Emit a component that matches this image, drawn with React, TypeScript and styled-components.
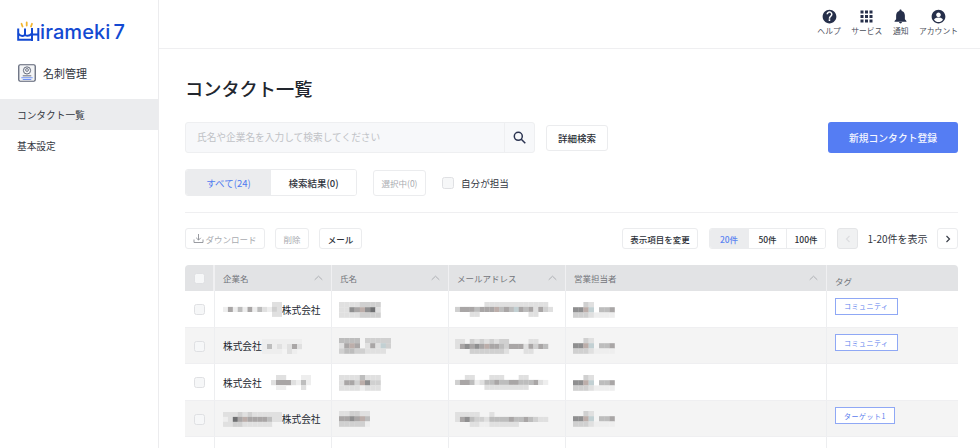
import React from "react";
import styled, { createGlobalStyle } from "styled-components";

const Global = createGlobalStyle`
  html, body { margin: 0; padding: 0; background: #fff; }
  body { font-family: "Noto Sans CJK JP", "Noto Sans", sans-serif; color: #22262e; overflow: hidden; }
  * { box-sizing: border-box; }
`;

const Page = styled.div`
  display: flex;
  width: 980px;
  height: 448px;
  overflow: hidden;
`;

const Sidebar = styled.aside`
  width: 159px;
  flex: none;
  border-right: 1px solid #ececee;
  display: flex;
  flex-direction: column;
`;

const LogoRow = styled.div`
  display: flex;
  align-items: center;
  height: 34px;
  margin-top: 15px;
  padding-left: 17px;
`;

const LogoText = styled.span`
  font-family: Inter, "Liberation Sans", sans-serif;
  font-size: 20px;
  font-weight: 500;
  line-height: 24px;
  color: #1349d2;
  letter-spacing: 0.1px;
`;

const LogoSeven = styled.span`
  font-family: Inter, "Liberation Sans", sans-serif;
  font-size: 20px;
  font-weight: 500;
  line-height: 24px;
  color: #1349d2;
  margin-left: 3px;
`;

const ProductRow = styled.div`
  display: flex;
  align-items: center;
  gap: 7px;
  height: 24px;
  margin-top: 12px;
  padding-left: 18px;
  font-size: 11px;
  color: #30343c;
`;

const NavList = styled.nav`
  display: flex;
  flex-direction: column;
  margin-top: 14px;
`;

const NavItem = styled.div<{ $active?: boolean }>`
  height: 31px;
  display: flex;
  align-items: center;
  padding-left: 17px;
  font-size: 9.7px;
  color: #33373f;
  background: ${(p) => (p.$active ? "#ebecee" : "transparent")};
`;

const Main = styled.main`
  flex: 1;
  min-width: 0;
  display: flex;
  flex-direction: column;
`;

const TopBar = styled.header`
  height: 49px;
  flex: none;
  border-bottom: 1px solid #efeff1;
  display: flex;
  justify-content: flex-end;
  gap: 10.5px;
  padding: 9px 22px 0 0;
`;

const TopItem = styled.div`
  display: flex;
  flex-direction: column;
  align-items: center;
  gap: 1px;
  font-size: 7.8px;
  line-height: 11px;
  color: #4a4e5a;
  white-space: nowrap;
`;

const Content = styled.div`
  padding: 0 22px 0 26px;
  display: flex;
  flex-direction: column;
`;

const Title = styled.h1`
  margin: 25px 0 0;
  font-size: 18.2px;
  line-height: 28px;
  font-weight: 500;
  color: #22262e;
`;

const SearchRow = styled.div`
  display: flex;
  align-items: center;
  margin-top: 20px;
  height: 31px;
`;

const SearchBox = styled.div`
  width: 350px;
  height: 31px;
  display: flex;
  background: #f7f8fa;
  border: 1px solid #eeeff1;
  border-radius: 3px;
`;

const SearchPlaceholder = styled.div`
  flex: 1;
  padding-left: 11px;
  font-size: 9.7px;
  line-height: 29px;
  color: #c0c2c6;
  border-right: 1px solid #eeeff1;
`;

const SearchButton = styled.div`
  width: 29px;
  display: flex;
  align-items: center;
  justify-content: center;
`;

const Btn = styled.div<{ $muted?: boolean; $w: number; $h?: number }>`
  width: ${(p) => p.$w}px;
  height: ${(p) => p.$h ?? 21}px;
  flex: none;
  display: flex;
  align-items: center;
  justify-content: center;
  gap: 1px;
  background: #fff;
  border: 1px solid #ebecee;
  border-radius: 3px;
  font-size: 8.5px;
  font-weight: ${(p) => (p.$muted ? 400 : 500)};
  color: ${(p) => (p.$muted ? "#a9abb0" : "#2b2f37")};
  white-space: nowrap;
`;

const DetailBtn = styled(Btn)`
  margin-left: 11px;
  font-size: 9.5px;
`;

const PrimaryBtn = styled.div`
  margin-left: auto;
  width: 130px;
  height: 31px;
  background: #557df3;
  border-radius: 3px;
  color: #f4f6ff;
  font-size: 9.8px;
  font-weight: 500;
  display: flex;
  align-items: center;
  justify-content: center;
`;

const FilterRow = styled.div`
  display: flex;
  align-items: center;
  margin-top: 16px;
  height: 27px;
`;

const Tabs = styled.div`
  display: flex;
  width: 172px;
  height: 27px;
  border: 1px solid #ebecee;
  border-radius: 3px;
  overflow: hidden;
`;

const Tab = styled.div<{ $active?: boolean; $w: number }>`
  width: ${(p) => p.$w}px;
  display: flex;
  align-items: center;
  justify-content: center;
  font-size: 9.5px;
  font-weight: ${(p) => (p.$active ? 400 : 500)};
  background: ${(p) => (p.$active ? "#ebecee" : "#fff")};
  color: ${(p) => (p.$active ? "#4f7bf0" : "#30343c")};
`;

const Selected = styled(Btn)`
  margin-left: 16px;
  color: #a9abb0;
`;

const Check = styled.span`
  display: block;
  width: 12px;
  height: 12px;
  flex: none;
  background: #f6f7f8;
  border: 1px solid #dfe0e3;
  border-radius: 2.5px;
`;

const TableCheck = styled(Check)`
  width: 11px;
  height: 11px;
`;

const OwnFilter = styled.label`
  display: flex;
  align-items: center;
  gap: 7px;
  margin-left: 16px;
  font-size: 9.6px;
  color: #33373f;
`;

const Rule = styled.hr`
  margin: 16px 0 0;
  border: 0;
  border-top: 1px solid #efeff1;
  height: 0;
`;

const ToolRow = styled.div`
  display: flex;
  align-items: center;
  margin-top: 15px;
  height: 21px;
  gap: 10px;
`;

const Spacer = styled.div`
  flex: 1;
`;

const Seg = styled.div`
  display: flex;
  height: 21px;
  margin-left: 1px;
  border: 1px solid #ebecee;
  border-radius: 3px;
  overflow: hidden;
`;

const SegItem = styled.div<{ $active?: boolean; $w: number }>`
  width: ${(p) => p.$w}px;
  display: flex;
  align-items: center;
  justify-content: center;
  font-size: 8.5px;
  font-weight: 500;
  background: ${(p) => (p.$active ? "#ebecee" : "#fff")};
  color: ${(p) => (p.$active ? "#5b84f2" : "#2b2f37")};
  & + & { border-left: 1px solid #ebecee; }
`;

const Pager = styled.div`
  display: flex;
  align-items: center;
  margin-left: 1px;
`;

const PageBtn = styled.div<{ $disabled?: boolean }>`
  width: 21px;
  height: 21px;
  display: flex;
  align-items: center;
  justify-content: center;
  border: 1px solid ${(p) => (p.$disabled ? "#e4e5e7" : "#ebecee")};
  border-radius: 3px;
  background: ${(p) => (p.$disabled ? "#f0f1f2" : "#fff")};
`;

const PageLabel = styled.div`
  width: 79px;
  text-align: center;
  font-size: 10px;
  color: #33373f;
`;

const Table = styled.div`
  margin-top: 16px;
  width: 773px;
`;

const cols = "30px 117px 117px 117px 261px 131px";

const HeadRow = styled.div`
  display: grid;
  grid-template-columns: ${cols};
  height: 26px;
  background: #e2e3e5;
  border-radius: 4px 4px 0 0;
`;

const HeadCell = styled.div<{ $tag?: boolean }>`
  display: flex;
  align-items: ${(p) => (p.$tag ? "flex-end" : "center")};
  justify-content: space-between;
  padding: 0 8px 0 8px;
  font-size: 8.5px;
  line-height: 13px;
  padding-bottom: ${(p) => (p.$tag ? "3px" : "0")};
  color: #72757b;
  border-right: 1px solid #f0f0f2;
  &:last-child { border-right: 0; }
`;

const CheckCell = styled(HeadCell)`
  justify-content: center;
  padding: 0;
  border-right-width: 2px;
`;

const Row = styled.div<{ $alt?: boolean }>`
  display: grid;
  grid-template-columns: ${cols};
  height: 36.5px;
  background: ${(p) => (p.$alt ? "#f4f4f4" : "#fff")};
  border-bottom: 1px solid #efeff1;
`;

const Cell = styled.div`
  display: flex;
  align-items: center;
  padding: 2px 0 0 8px;
  font-size: 9.7px;
  color: #22262e;
  border-right: 1px solid #edeef0;
  white-space: nowrap;
  overflow: hidden;
  &:last-child { border-right: 0; }
`;

const MosaicCell = styled(Cell)`
  padding-left: 7px;
`;

const MailCell = styled(Cell)`
  padding-left: 6px;
`;

const BodyCheck = styled(Cell)`
  justify-content: center;
  padding-left: 0;
`;

const TagCell = styled(Cell)`
  align-items: flex-start;
  padding-top: 6.5px;
`;

const Tag = styled.span`
  display: inline-flex;
  align-items: center;
  justify-content: center;
  height: 17px;
  padding: 0 8px;
  border: 1px solid #8fa8f5;
  background: #fff;
  font-size: 7px;
  letter-spacing: 0.5px;
  color: #5c80ee;
`;

const MosaicSvg = styled.svg`
  display: block;
  flex: none;
  filter: blur(0.4px);
`;

/* one character per block: 0 = transparent, larger = darker, a/b = tinted */
const shades: Record<string, string> = {
  "1": "#eeeeee",
  "2": "#e0e0e0",
  "3": "#d0d0d0",
  "4": "#bdbdbd",
  "5": "#a9a6a6",
  "6": "#8f8f90",
  "7": "#6f7072",
  a: "#bcaeaa",
  b: "#c2d0d3",
};

const Mosaic = ({ rows, block = 5 }: { rows: string[]; block?: number }) => (
  <MosaicSvg
    width={rows[0].length * block}
    height={rows.length * block}
    viewBox={`0 0 ${rows[0].length * block} ${rows.length * block}`}
  >
    {rows.flatMap((r, y) =>
      r.split("").map((c, x) =>
        shades[c] ? <rect key={`${x}-${y}`} x={x * block} y={y * block} width={block + 0.2} height={block + 0.2} fill={shades[c]} /> : null
      )
    )}
  </MosaicSvg>
);

const Chevron = () => (
  <svg width="9" height="6" viewBox="0 0 9 6" fill="none">
    <path d="M.7 4.800l3.800-3.600 3.800 3.600" stroke="#aeb0b4" strokeWidth="1" />
  </svg>
);

const Pager2 = ({ dir, color }: { dir: "l" | "r"; color: string }) => (
  <svg width="6" height="8" viewBox="0 0 6 8" fill="none">
    <path d={dir === "r" ? "M1.500 1l3 3-3 3" : "M4.500 1l-3 3 3 3"} stroke={color} strokeWidth="1.200" />
  </svg>
);

const HelpIcon = () => (
  <svg width="15" height="15" viewBox="0 0 24 24">
    <path fill="#262f4a" d="M12 1C5.900 1 1 5.900 1 12s4.900 11 11 11 11-4.900 11-11S18.100 1 12 1zm1.200 18h-2.500v-2.500h2.500V19zm2.600-7.900l-1.100 1.100c-.9.900-1.500 1.600-1.500 3.300h-2.400v-.6c0-1.300.6-2.500 1.500-3.400l1.500-1.500c.4-.4.7-1 .7-1.700 0-1.300-1.100-2.400-2.400-2.400S9.600 7 9.600 8.300H7.200C7.200 5.700 9.400 3.500 12 3.500s4.800 2.200 4.800 4.800c0 1.100-.4 2-1 2.800z" />
  </svg>
);

const GridIcon = () => (
  <svg width="15" height="15" viewBox="0 0 15 15" fill="#262f4a">
    {[1.5, 6, 10.5].flatMap((y) => [1.5, 6, 10.5].map((x) => <rect key={`${x}${y}`} x={x} y={y} width="3" height="3" />))}
  </svg>
);

const BellIcon = () => (
  <svg width="15" height="15" viewBox="0 0 24 24">
    <path fill="#262f4a" d="M12 23c1.300 0 2.300-1 2.300-2.300H9.700C9.700 22 10.700 23 12 23zm7-6.500v-6c0-3.500-1.900-6.400-5.200-7.200v-.8C13.800 1.500 13 .7 12 .7s-1.800.8-1.800 1.800v.8C6.900 4.100 5 7 5 10.500v6L2.500 19v1.300h19V19L19 16.500z" />
  </svg>
);

const AccountIcon = () => (
  <svg width="15" height="15" viewBox="0 0 24 24">
    <path fill="#262f4a" d="M12 1C5.900 1 1 5.900 1 12s4.900 11 11 11 11-4.900 11-11S18.100 1 12 1zm0 4.500c2 0 3.700 1.700 3.700 3.700S14 12.900 12 12.900 8.300 11.200 8.300 9.200 10 5.500 12 5.500zm0 15.200c-2.900 0-5.500-1.500-7-3.700 0-2.300 4.700-3.600 7-3.600s7 1.300 7 3.600c-1.500 2.200-4.100 3.700-7 3.700z" />
  </svg>
);

const SearchIcon = () => (
  <svg width="13" height="13" viewBox="0 0 13 13" fill="none" stroke="#2a3350" strokeWidth="1.500">
    <circle cx="5.300" cy="5.300" r="4" />
    <path d="M8.300 8.300l4 4" />
  </svg>
);

const DownloadIcon = () => (
  <svg width="11" height="11" viewBox="0 0 11 11" fill="none" stroke="#8d9096" strokeWidth="0.900">
    <path d="M5.500 1v6M3.200 4.800l2.300 2.300 2.300-2.300M1 6.500v3h9v-3" />
  </svg>
);

const LogoMark = () => (
  <svg width="23" height="26" viewBox="0 0 23 26" fill="none">
    <g stroke="#f2b632" strokeWidth="1.800" strokeLinecap="round">
      <path d="M5.500 7.500L4.500 4.800M9.700 6.500V3.500M14 7.500l1-2.700" />
    </g>
    <g stroke="#1349d2" strokeWidth="2">
      <path d="M1.200 9.500v11.300h14M15 9v13M21.300 9v13M15 15.500h6.300" />
      <path d="M1.200 14.500q3 4 6.800 1.500q3.500 2 7-1.500" />
      <path d="M8 9.500v6.500" />
    </g>
  </svg>
);

const CardIcon = () => (
  <svg width="18" height="18" viewBox="0 0 19 19" fill="none">
    <rect x="0.800" y="0.800" width="17.400" height="17.400" rx="1.500" fill="#f3f4f6" stroke="#5b6274" strokeWidth="1.300" />
    <circle cx="9.500" cy="6.800" r="3.800" stroke="#5b6274" strokeWidth="1" />
    <circle cx="9.500" cy="6.300" r="1.500" stroke="#5b6274" strokeWidth="0.900" />
    <path d="M5 12.500h9" stroke="#5b6274" strokeWidth="1" />
    <path d="M3.500 14.500h12M5 16.300h9" stroke="#6f92f2" strokeWidth="1.100" />
  </svg>
);

const companyMasks = [
  ["000000000022", "151415142132", "000000000022"],
  ["11111111", "14121252", "11110210"],
  ["02200011", "25552141", "01100020"],
  ["222323222222", "1275a5555422", "223322222200"],
];

const nameMasks = [
  ["22223333", "2265a672", "22223333"],
  ["4444033333", "25a50252b3", "3443322220"],
  ["22224222", "2553a633", "22221222"],
  ["223322", "5565a4", "333331"],
];

const mailMasks = [
  ["00000022222222222220", "35554555a454b5452532", "00022000000000022000"],
  ["22032323233000022000", "256565a5543555253540", "00033333332000220000"],
  ["00220002220002200000", "35541244544554445210", "00000022222222200000"],
  ["22222002000000000000", "25643324444544543220", "00022112222220000000"],
];

const ownerMask = ["00320000", "66ab0445", "33321111"];

type RowData = {
  mask: string[];
  textFirst: boolean;
  gap?: number;
  name: string[];
  mail: string[];
  tag?: string;
};

const rows: RowData[] = [
  { mask: companyMasks[0], textFirst: false, name: nameMasks[0], mail: mailMasks[0], tag: "コミュニティ" },
  { mask: companyMasks[1], textFirst: true, name: nameMasks[1], mail: mailMasks[1], tag: "コミュニティ" },
  { mask: companyMasks[2], textFirst: true, gap: 9, name: nameMasks[2], mail: mailMasks[2] },
  { mask: companyMasks[3], textFirst: false, name: nameMasks[3], mail: mailMasks[3], tag: "ターゲット1" },
];

const CompanyGap = styled.span<{ $w: number }>`
  display: block;
  width: ${(p) => p.$w}px;
  flex: none;
`;

const heads = ["企業名", "氏名", "メールアドレス", "営業担当者"];

export default function App() {
  return (
    <Page>
      <Global />
      <Sidebar>
        <LogoRow>
          <LogoMark />
          <LogoText>irameki</LogoText>
          <LogoSeven>7</LogoSeven>
        </LogoRow>
        <ProductRow>
          <CardIcon />
          名刺管理
        </ProductRow>
        <NavList>
          <NavItem $active>コンタクト一覧</NavItem>
          <NavItem>基本設定</NavItem>
        </NavList>
      </Sidebar>
      <Main>
        <TopBar>
          <TopItem><HelpIcon />ヘルプ</TopItem>
          <TopItem><GridIcon />サービス</TopItem>
          <TopItem><BellIcon />通知</TopItem>
          <TopItem><AccountIcon />アカウント</TopItem>
        </TopBar>
        <Content>
          <Title>コンタクト一覧</Title>
          <SearchRow>
            <SearchBox>
              <SearchPlaceholder>氏名や企業名を入力して検索してください</SearchPlaceholder>
              <SearchButton><SearchIcon /></SearchButton>
            </SearchBox>
            <DetailBtn $w={62} $h={26}>詳細検索</DetailBtn>
            <PrimaryBtn>新規コンタクト登録</PrimaryBtn>
          </SearchRow>
          <FilterRow>
            <Tabs>
              <Tab $active $w={85}>すべて(24)</Tab>
              <Tab $w={85}>検索結果(0)</Tab>
            </Tabs>
            <Selected $muted $w={53} $h={26}>選択中(0)</Selected>
            <OwnFilter><Check />自分が担当</OwnFilter>
          </FilterRow>
          <Rule />
          <ToolRow>
            <Btn $muted $w={80}><DownloadIcon />ダウンロード</Btn>
            <Btn $muted $w={34}>削除</Btn>
            <Btn $w={43}>メール</Btn>
            <Spacer />
            <Btn $w={76}>表示項目を変更</Btn>
            <Seg>
              <SegItem $active $w={38}>20件</SegItem>
              <SegItem $w={38}>50件</SegItem>
              <SegItem $w={39}>100件</SegItem>
            </Seg>
            <Pager>
              <PageBtn $disabled><Pager2 dir="l" color="#dcdde0" /></PageBtn>
              <PageLabel>1-20件を表示</PageLabel>
              <PageBtn><Pager2 dir="r" color="#3a3e48" /></PageBtn>
            </Pager>
          </ToolRow>
          <Table>
            <HeadRow>
              <CheckCell><TableCheck /></CheckCell>
              {heads.map((h) => (
                <HeadCell key={h}>{h}<Chevron /></HeadCell>
              ))}
              <HeadCell $tag>タグ</HeadCell>
            </HeadRow>
            {rows.map((r, i) => (
              <Row key={i} $alt={i % 2 === 1}>
                <BodyCheck><TableCheck /></BodyCheck>
                <Cell>
                  {r.textFirst && "株式会社"}
                  {r.gap && <CompanyGap $w={r.gap} />}
                  <Mosaic rows={r.mask} block={r.textFirst ? 5 : 4.9} />
                  {!r.textFirst && "株式会社"}
                </Cell>
                <MosaicCell><Mosaic rows={r.name} block={5.2} /></MosaicCell>
                <MailCell><Mosaic rows={r.mail} block={4.9} /></MailCell>
                <MosaicCell><Mosaic rows={ownerMask} block={5.2} /></MosaicCell>
                <TagCell>{r.tag && <Tag>{r.tag}</Tag>}</TagCell>
              </Row>
            ))}
            <Row>
              <BodyCheck /><Cell /><Cell /><Cell /><Cell /><Cell />
            </Row>
          </Table>
        </Content>
      </Main>
    </Page>
  );
}
